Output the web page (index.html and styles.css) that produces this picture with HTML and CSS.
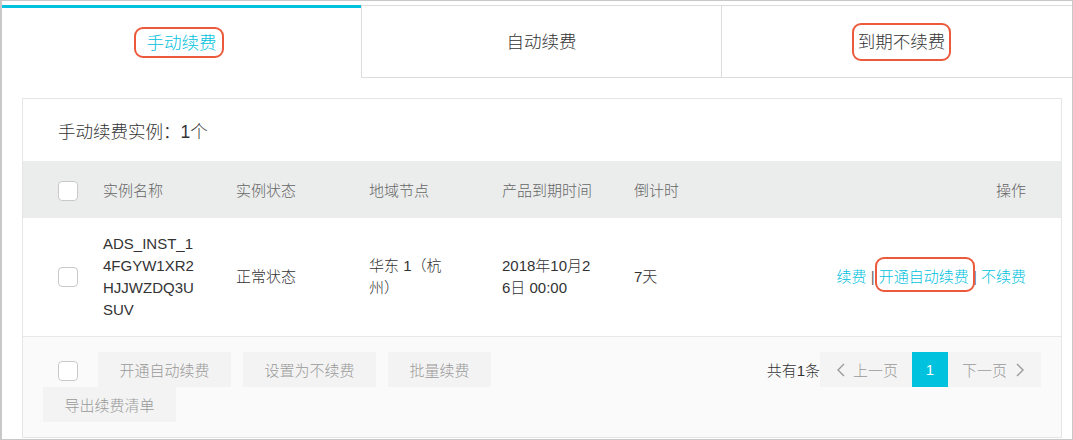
FILE: index.html
```html
<!DOCTYPE html>
<html lang="zh-CN">
<head>
<meta charset="utf-8">
<title>续费管理</title>
<link rel="stylesheet" href="styles.css">
</head>
<body>
<div class="frame">
  <div class="tabs">
    <div class="tab active"><span class="label mark mark-tab1">手动续费</span></div>
    <div class="tab"><span class="label">自动续费</span></div>
    <div class="tab"><span class="label mark mark-tab3">到期不续费</span></div>
  </div>

  <div class="card">
    <div class="card-title">手动续费实例：1个</div>

    <div class="row head">
      <div class="cell check"><span class="checkbox"></span></div>
      <div class="cell">实例名称</div>
      <div class="cell">实例状态</div>
      <div class="cell">地域节点</div>
      <div class="cell">产品到期时间</div>
      <div class="cell">倒计时</div>
      <div class="cell ops">操作</div>
    </div>

    <div class="row data">
      <div class="cell check"><span class="checkbox"></span></div>
      <div class="cell wrap">ADS_INST_14FGYW1XR2HJJWZDQ3USUV</div>
      <div class="cell wrap">正常状态</div>
      <div class="cell wrap">华东 1（杭州）</div>
      <div class="cell wrap">2018年10月26日 00:00</div>
      <div class="cell">7天</div>
      <div class="cell ops"><a class="link">续费</a> <span class="sep">|</span> <a class="link mark mark-op">开通自动续费</a> <span class="sep">|</span> <a class="link">不续费</a></div>
    </div>

    <div class="footer">
      <div class="batch">
        <span class="checkbox"></span>
        <button class="btn">开通自动续费</button>
        <button class="btn">设置为不续费</button>
        <button class="btn">批量续费</button>
        <button class="btn">导出续费清单</button>
      </div>
      <div class="pager">
        <span class="total">共有1条</span>
        <button class="page prev"><svg class="chev" width="8" height="14" viewBox="0 0 8 14"><polyline points="7,1 1,7 7,13"/></svg>上一页</button>
        <button class="page current">1</button>
        <button class="page next">下一页<svg class="chev" width="8" height="14" viewBox="0 0 8 14"><polyline points="1,1 7,7 1,13"/></svg></button>
      </div>
    </div>
  </div>
</div>
</body>
</html>
```

FILE: styles.css
```css
* {
  box-sizing: border-box;
}

html,
body {
  margin: 0;
  padding: 0;
  background: #fff;
}

body {
  font-family: "Liberation Sans", "Noto Sans CJK SC", sans-serif;
  font-size: 15px;
  font-weight: 300;
  color: #333;
}

.frame {
  width: 1073px;
  height: 440px;
  border: 1px solid #c8c8c8;
  border-left-width: 2px;
  padding-top: 4px;
  overflow: hidden;
}

/* Tabs */
.tabs {
  display: flex;
  width: 1079px;
}

.tab {
  flex: none;
  width: 360px;
  height: 73px;
  display: flex;
  align-items: center;
  justify-content: center;
  font-size: 17.5px;
  color: #333;
  border-top: 1px solid #dcdcdc;
  border-bottom: 1px solid #dcdcdc;
  border-left: 1px solid #dcdcdc;
}

.tab.active {
  width: 359px;
  border-top: 3px solid #00c1de;
  border-bottom: 0;
  border-left: 0;
  color: #00c1de;
}

.label {
  display: inline-block;
  line-height: 24px;
}

/* Annotation marks */
.mark {
  position: relative;
}

.mark::after {
  content: "";
  position: absolute;
  border: 2px solid #ec5a3b;
  border-radius: 9px;
}

.mark-tab1::after {
  left: -13px;
  right: -7px;
  top: -4px;
  bottom: -3px;
}

.mark-tab3::after {
  left: -6px;
  right: -6px;
  top: -7px;
  bottom: -7px;
}

.mark-op::after {
  left: -4px;
  right: -6px;
  top: -9px;
  bottom: -4px;
}

/* Card */
.card {
  width: 1040px;
  margin: 20px 0 0 20px;
  border: 1px solid #e6e6e6;
  background: #fff;
}

.card-title {
  height: 62px;
  display: flex;
  align-items: center;
  padding-left: 35px;
  font-size: 17.5px;
  color: #333;
}

.row {
  display: grid;
  grid-template-columns: 45px 133px 133px 133px 132px 1fr auto;
  align-items: center;
  padding: 0 35px;
}

.head {
  height: 57px;
  background: #ebecec;
  color: #666;
}

.head .check {
  padding-top: 3px;
}

.data {
  padding-top: 15px;
  padding-bottom: 15px;
  border-bottom: 1px solid #e8e8e8;
  line-height: 22px;
  color: #333;
}

.cell.wrap {
  padding-right: 39px;
  word-break: break-all;
}

.ops {
  justify-self: end;
  text-align: right;
  white-space: nowrap;
}

.checkbox {
  display: block;
  width: 20px;
  height: 20px;
  border: 1px solid #c9c9c9;
  border-radius: 4px;
  background: #fff;
}

.link {
  display: inline-block;
  line-height: 22px;
  color: #00c1de;
}

.sep {
  color: #666;
}

/* Footer */
.footer {
  display: flex;
  justify-content: space-between;
  align-items: flex-start;
  padding: 15px 20px 15px 20px;
  background: #fafafa;
}

.batch {
  width: 520px;
  display: flex;
  flex-wrap: wrap;
  align-items: center;
}

.batch .checkbox {
  margin: 2px 20px 0 15px;
}

.btn {
  height: 35px;
  padding: 0 21.5px;
  margin: 0 12px 0 0;
  border: 0;
  background: #f3f3f3;
  color: #999;
  font-family: inherit;
  font-size: 15px;
  font-weight: inherit;
}

.pager {
  display: flex;
  align-items: center;
}

.total {
  color: #333;
}

.page {
  height: 35px;
  display: flex;
  align-items: center;
  margin: 0;
  border: 0;
  background: #f4f4f4;
  color: #999;
  font-family: inherit;
  font-size: 15px;
  font-weight: inherit;
}

.prev {
  padding: 0 14px 0 17px;
  gap: 8px;
}

.next {
  padding: 0 17px 0 14px;
  gap: 9px;
}

.current {
  width: 36px;
  justify-content: center;
  padding: 0;
  background: #00c1de;
  color: #fff;
}

.chev {
  display: block;
  fill: none;
  stroke: #9a9a9a;
  stroke-width: 1.4;
}
```
